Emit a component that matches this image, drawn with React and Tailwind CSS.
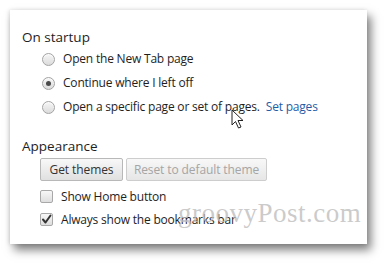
import React from "react";

function Radio({ checked }) {
  return (
    <span className="relative flex h-[13px] w-[13px] shrink-0 items-center justify-center rounded-full border border-[#a3a3a3] bg-gradient-to-b from-[#f6f6f6] to-[#dcdcdc] shadow-[inset_0_1px_1px_rgba(255,255,255,0.8)]">
      {checked && <span className="h-[5px] w-[5px] rounded-full bg-[#4a4a4a]" />}
    </span>
  );
}

function Checkbox({ checked }) {
  return (
    <span className="relative flex h-[13px] w-[13px] shrink-0 items-center justify-center rounded-[2px] border border-[#a8a8a8] bg-gradient-to-b from-[#f7f7f7] to-[#dedede]">
      {checked && (
        <svg width="11" height="11" viewBox="0 0 11 11">
          <path d="M2 5.5 L4.5 8.5 L9.5 1.5" fill="none" stroke="#333" strokeWidth="2" strokeLinecap="round" strokeLinejoin="round" />
        </svg>
      )}
    </span>
  );
}

function Cursor() {
  return (
    <svg className="absolute left-[221px] top-[99px]" width="14" height="20" viewBox="0 0 14 20">
      <path d="M1 1 L1 16 L4.5 12.5 L7.5 19 L10 18 L7 11.5 L12 11.5 Z" fill="#fff" stroke="#222" strokeWidth="1" strokeLinejoin="round" />
    </svg>
  );
}

export default function App() {
  const font = "font-['Open_Sans','Noto_Sans',sans-serif]";
  return (
    <div className={`h-[263px] w-[386px] overflow-hidden bg-white pl-[10px] pt-[10px] ${font}`}>
      <div className="relative h-[234px] w-[357px] bg-white pl-[12px] pt-[17px] shadow-[4px_6px_9px_rgba(0,0,0,0.5),-1px_0_4px_rgba(0,0,0,0.12)]">
        <div className="h-[20px] text-[13.5px] leading-[20px] text-[#1e1e1e]">On startup</div>
        <div className="pl-[20px] text-[12px] tracking-[-0.2px] text-[#1e1e1e]">
          <div className="flex h-[24px] items-center gap-[8px]">
            <Radio />
            <span>Open the New Tab page</span>
          </div>
          <div className="flex h-[24px] items-center gap-[8px]">
            <Radio checked />
            <span>Continue where I left off</span>
          </div>
          <div className="flex h-[24px] items-center gap-[8px]">
            <Radio />
            <span>Open a specific page or set of pages.</span>
            <span className="-ml-[2px] text-[#1f5ca8]">Set pages</span>
          </div>
        </div>
        <div className="mt-[17px] h-[20px] text-[13.5px] leading-[20px] text-[#1e1e1e]">Appearance</div>
        <div className="mt-[2px] flex gap-[3px] pl-[18px] text-[12px] tracking-[-0.1px]">
          <button className="h-[23px] w-[83px] rounded-[2px] border border-[#b8b8b8] bg-gradient-to-b from-[#f8f8f8] to-[#e0e0e0] text-[#333]">
            Get themes
          </button>
          <button className="h-[23px] w-[141px] rounded-[2px] border border-[#cdcdcd] bg-gradient-to-b from-[#f8f8f8] to-[#e6e6e6] text-[#a5a5a5]">
            Reset to default theme
          </button>
        </div>
        <div className="mt-[4px] pl-[18px] text-[12px] tracking-[-0.2px] text-[#1e1e1e]">
          <div className="flex h-[23px] items-center gap-[8px]">
            <Checkbox />
            <span>Show Home button</span>
          </div>
          <div className="flex h-[23px] items-center gap-[8px]">
            <Checkbox checked />
            <span>Always show the bookmarks bar</span>
          </div>
        </div>
        <div className="pointer-events-none absolute left-[168px] top-[190px] font-['Liberation_Serif',serif] text-[27px] leading-none tracking-[0.5px] text-[#bdbdbd]/80">
          groovyPost.com
        </div>
        <Cursor />
      </div>
    </div>
  );
}
